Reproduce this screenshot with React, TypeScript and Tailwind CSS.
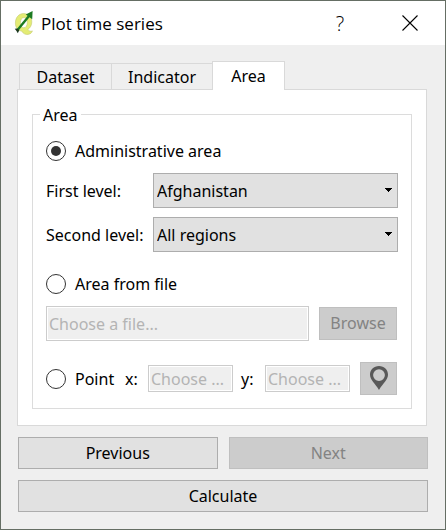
import { useState } from "react";
import type { ReactNode } from "react";

const buttonBase =
  "border border-[#adadad] bg-[#e1e1e1] text-black disabled:border-[#bfbfbf] disabled:bg-[#cccccc] disabled:text-[#838383]";
const inputBase =
  "w-0 min-w-0 border border-[#cccccc] bg-[#efefef] pl-0.5 text-black shadow-[inset_0_0_0_1px_white] placeholder:text-[#b4b4b4]";

function AppIcon() {
  return (
    <svg className="h-6 w-5 shrink-0" viewBox="0 0 20 24" aria-hidden="true">
      <path
        fillRule="evenodd"
        d="M9.500 2.600C4.800 2.600 1.400 6.600 1.400 12c0 4.800 2.600 7.800 6.200 8 1.500 2.600 3.800 3.700 6.400 3.400 2.300-.3 3.800-1.500 4.400-3.500-1.800.8-3.400.4-4.500-1.500 2.500-1.600 3.900-4.400 3.900-7.600 0-4.900-3.300-8.200-8.300-8.200zM10 6.600c2.300 0 3.300 1.900 3.300 4.900s-1.300 5.300-3.500 5.300-3.400-2-3.400-5 1.200-5.200 3.600-5.200z"
        fill="#e4ec74"
        stroke="#c3ca72"
        strokeWidth="0.6"
      />
      <path d="M3.500 19 15 5" stroke="#1c7a22" strokeWidth="2.400" />
      <path d="M18.600 0 18.200 8.200 11.800 3.600z" fill="#1c7a22" />
      <path d="M.8 17.800l2.500-.2 2 1.600-1.500 3-1-1.600z" fill="#1d3a20" />
    </svg>
  );
}

function PinIcon() {
  return (
    <svg className="h-6 w-5" viewBox="0 0 20 24" aria-hidden="true">
      <path
        fillRule="evenodd"
        d="M10 0C4.800 0 1 3.900 1 8.800c0 5 5 8.400 9 15.200 4-6.800 9-10.200 9-15.200C19 3.900 15.200 0 10 0zm0 3.200a5.900 5.900 0 1 1 0 11.800 5.900 5.900 0 0 1 0-11.800z"
        fill="#595959"
      />
    </svg>
  );
}

function RadioOption({
  value,
  selected,
  onSelect,
  children,
}: {
  value: string;
  selected: string;
  onSelect: (value: string) => void;
  children: ReactNode;
}) {
  return (
    <label className="flex h-5 items-center gap-[9px]">
      <input
        type="radio"
        name="area"
        value={value}
        checked={selected === value}
        onChange={() => onSelect(value)}
        className="grid size-5 shrink-0 appearance-none place-items-center rounded-full border border-[#333333] bg-white before:size-2.5 before:rounded-full checked:before:bg-[#333333]"
      />
      <span className="pt-px">{children}</span>
    </label>
  );
}

function LevelSelect({ id, label, options }: { id: string; label: string; options: string[] }) {
  return (
    <>
      <label htmlFor={id} className="pt-px">
        {label}
      </label>
      <div className="relative">
        <select
          id={id}
          className="block h-[35px] w-full appearance-none border border-[#adadad] bg-[#e1e1e1] pt-px pl-[3px] text-black"
        >
          {options.map((option) => (
            <option key={option}>{option}</option>
          ))}
        </select>
        <svg
          className="pointer-events-none absolute top-[15px] right-1.5 h-1 w-[7px]"
          viewBox="0 0 7 4"
          aria-hidden="true"
          shapeRendering="crispEdges"
        >
          <path d="M0 0h7v1H6v1H5v1H4v1H3V3H2V2H1V1H0z" fill="#000" />
        </svg>
      </div>
    </>
  );
}

export default function App() {
  const [area, setArea] = useState("admin");

  return (
    <div className="flex min-h-screen flex-col border border-[#656e64] bg-[#efefef] font-['Noto_Sans','Open_Sans',sans-serif] text-[16px] leading-[23px] text-black">
      <header className="flex h-11 items-center bg-white pl-[13px]">
        <AppIcon />
        <h1 className="ml-[7px] grow font-['Open_Sans','Noto_Sans',sans-serif] text-[17px]">Plot time series</h1>
        <button type="button" aria-label="Help" className="w-[70px] font-['Open_Sans',sans-serif] text-[20px] font-light">
          ?
        </button>
        <button type="button" aria-label="Close" className="flex w-[70px] justify-center">
          <svg className="size-4" viewBox="0 0 16 16" aria-hidden="true">
            <path d="M.5.5l15 15M15.500.5l-15 15" stroke="#000" strokeWidth="1.100" />
          </svg>
        </button>
      </header>

      <main className="pt-4 pr-[18px] pl-4">
        <div role="tablist" className="flex items-end pl-0.5">
          <button
            type="button"
            role="tab"
            aria-selected="false"
            className="h-[26px] w-[93px] border border-b-0 border-[#d9d9d9] pt-px"
          >
            Dataset
          </button>
          <button
            type="button"
            role="tab"
            aria-selected="false"
            className="h-[26px] w-[100px] border-t border-[#d9d9d9] pt-px"
          >
            Indicator
          </button>
          <button
            type="button"
            role="tab"
            aria-selected="true"
            className="z-10 -mb-px h-[29px] w-[73px] border border-b-0 border-[#d9d9d9] bg-white"
          >
            Area
          </button>
        </div>

        <section role="tabpanel" className="border border-[#d9d9d9] bg-white px-3.5 pt-[13px] pb-4">
          <fieldset className="min-w-0 border border-[#dcdcdc] px-[13px] pb-[13px]">
            <legend className="-ml-1.5 px-[3px] pt-px leading-[22px]">Area</legend>
            <div className="pt-[15px]">
              <RadioOption value="admin" selected={area} onSelect={setArea}>
                Administrative area
              </RadioOption>
            </div>
            <div className="mt-3 grid grid-cols-[107px_1fr] items-center gap-y-[9px]">
              <LevelSelect id="first" label="First level:" options={["Afghanistan"]} />
              <LevelSelect id="second" label="Second level:" options={["All regions"]} />
            </div>
            <div className="mt-[22px]">
              <RadioOption value="file" selected={area} onSelect={setArea}>
                Area from file
              </RadioOption>
            </div>
            <div className="mt-3 flex items-center gap-2.5 pr-px">
              <input
                type="text"
                aria-label="Area file"
                placeholder="Choose a file..."
                disabled
                className={`${inputBase} h-[35px] grow`}
              />
              <button type="button" disabled className={`${buttonBase} h-[33px] w-[78px]`}>
                Browse
              </button>
            </div>
            <div className="mt-[21px] flex items-center pr-px">
              <div className="w-[79px]">
                <RadioOption value="point" selected={area} onSelect={setArea}>
                  Point
                </RadioOption>
              </div>
              <label htmlFor="point-x" className="w-[23px] pt-px">
                x:
              </label>
              <input
                id="point-x"
                type="text"
                placeholder="Choose ..."
                disabled
                className={`${inputBase} h-[27px] flex-1`}
              />
              <label htmlFor="point-y" className="w-8 pt-px pl-2">
                y:
              </label>
              <input
                id="point-y"
                type="text"
                placeholder="Choose ..."
                disabled
                className={`${inputBase} h-[27px] flex-1`}
              />
              <button
                type="button"
                disabled
                aria-label="Pick point on map"
                className={`${buttonBase} ml-2.5 flex h-[33px] w-[37px] shrink-0 items-start justify-center pt-[3px]`}
              >
                <PinIcon />
              </button>
            </div>
          </fieldset>
        </section>
      </main>

      <footer className="grid grid-cols-2 gap-x-[11px] gap-y-[11px] px-[17px] pt-[11px] pb-4">
        <button type="button" className={`${buttonBase} h-8`}>
          Previous
        </button>
        <button type="button" disabled className={`${buttonBase} h-8`}>
          Next
        </button>
        <button type="button" className={`${buttonBase} col-span-2 h-8`}>
          Calculate
        </button>
      </footer>
    </div>
  );
}
